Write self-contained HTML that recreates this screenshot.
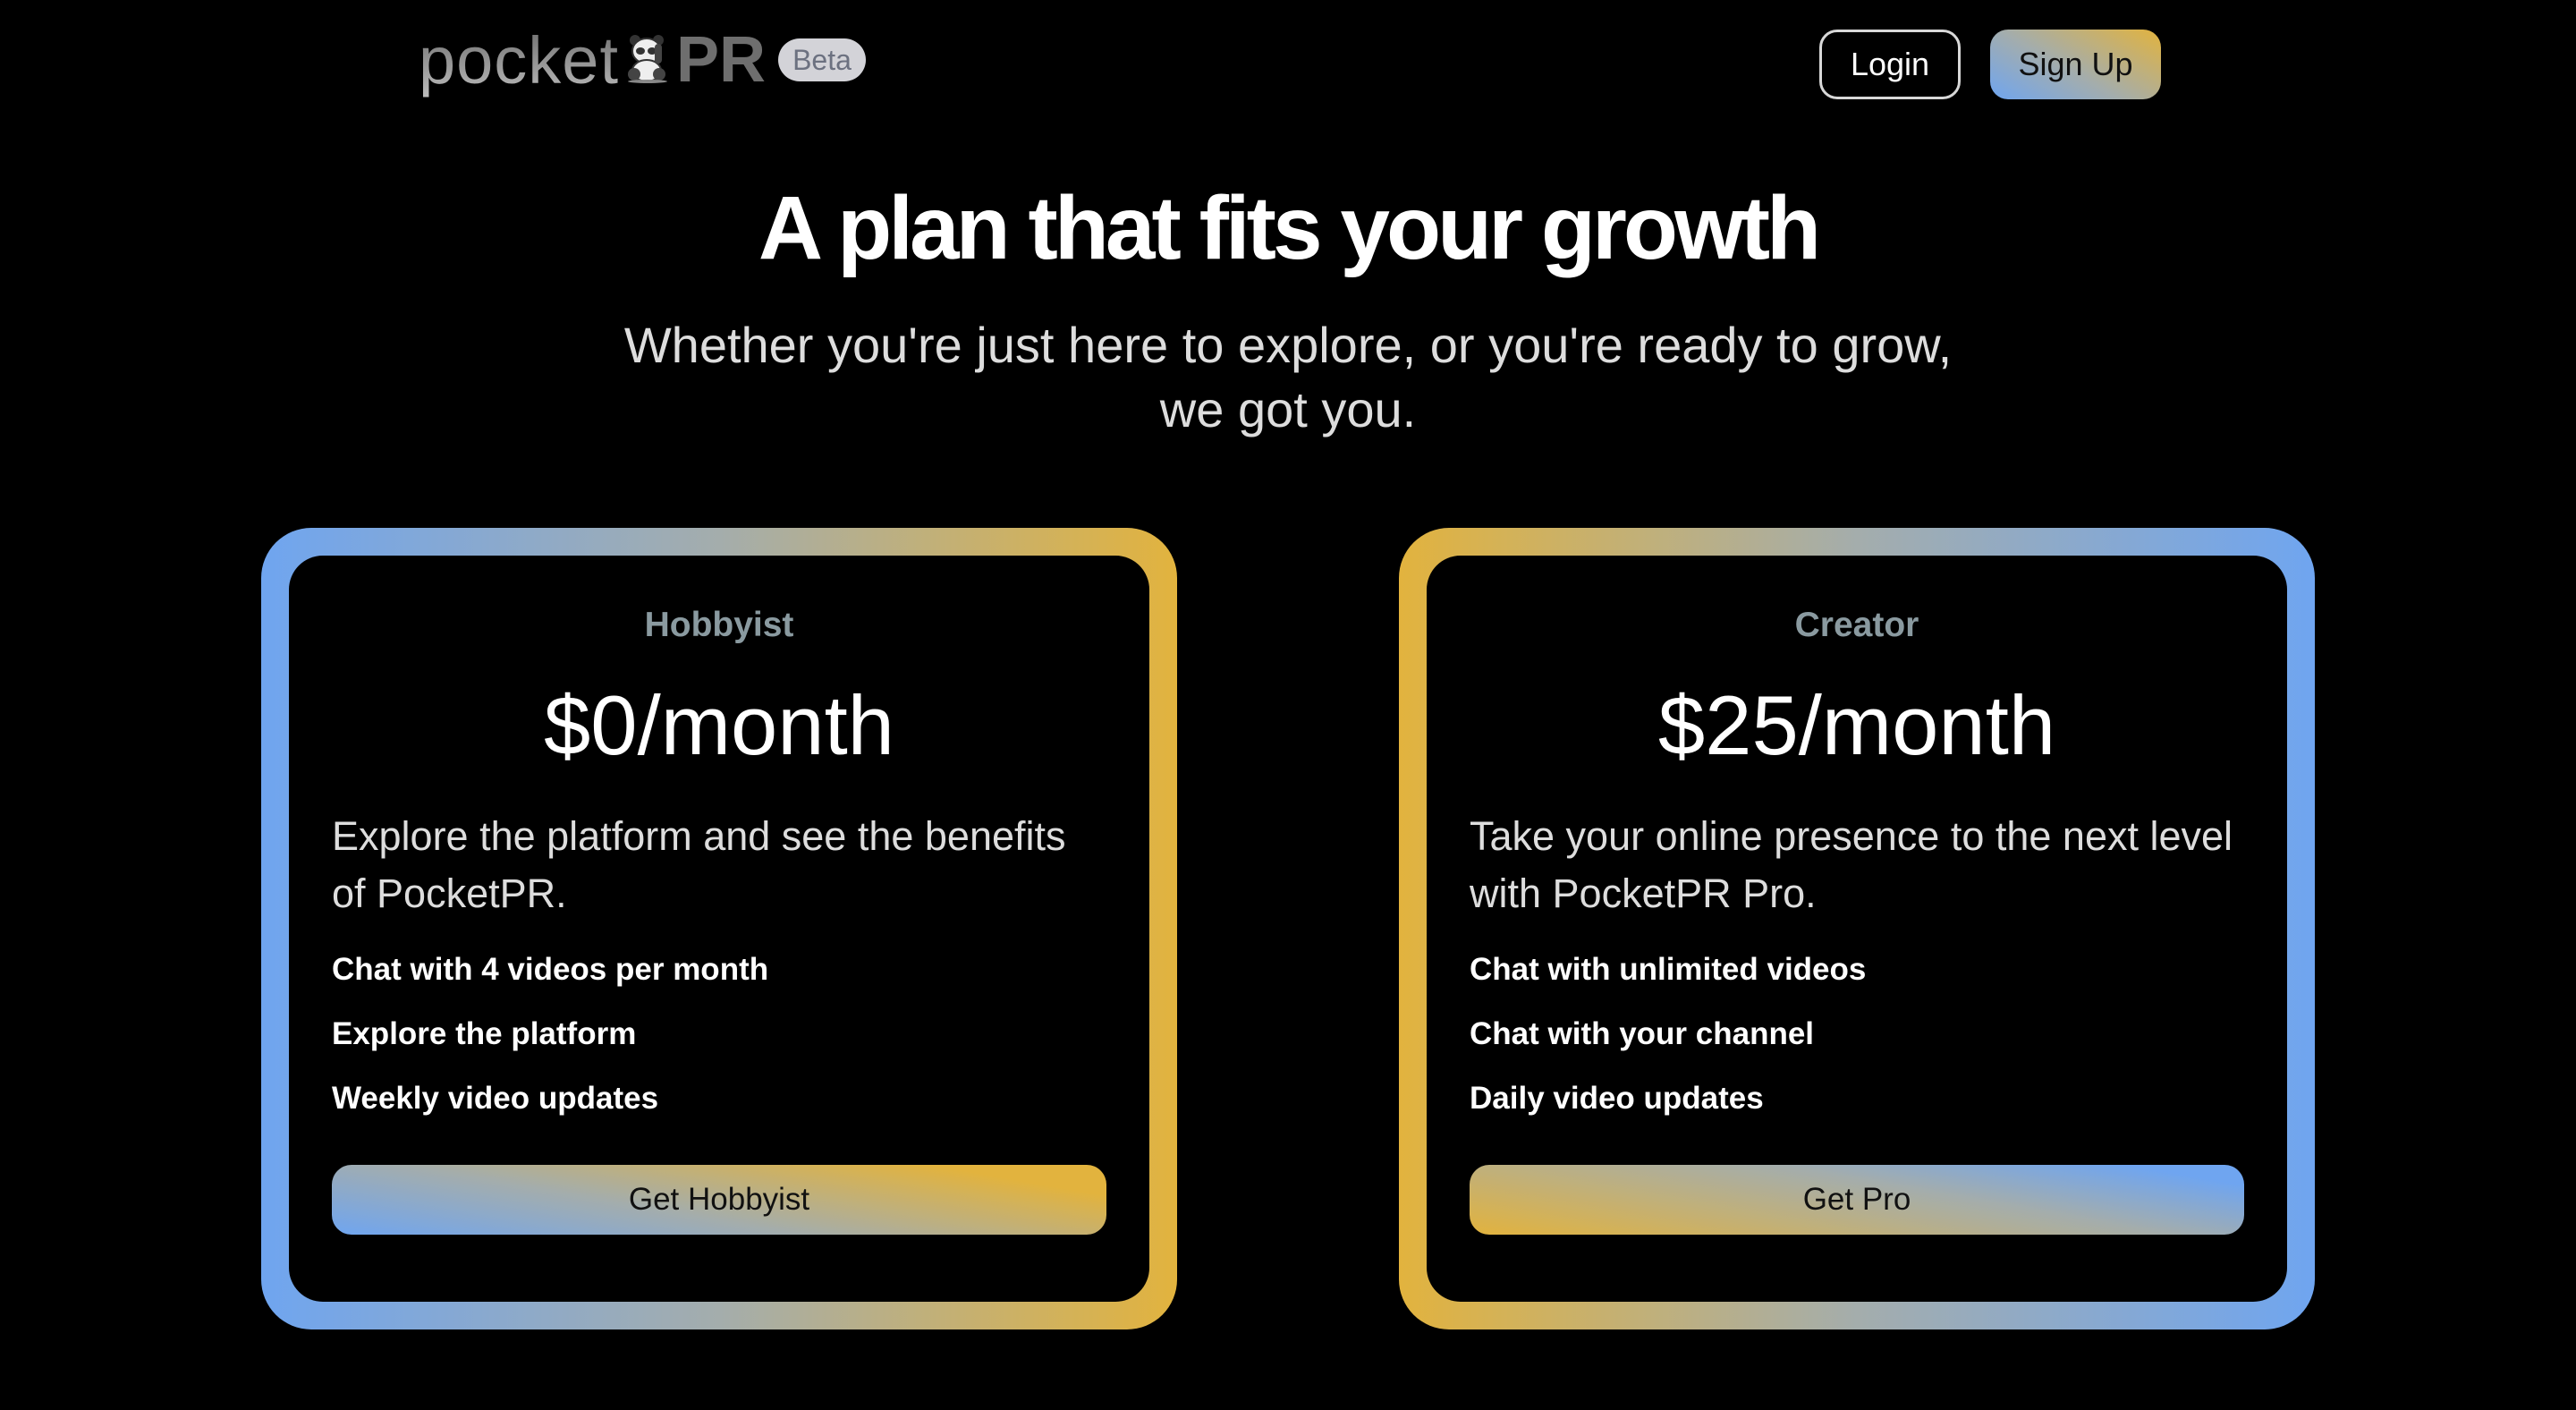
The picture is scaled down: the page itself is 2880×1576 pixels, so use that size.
<!DOCTYPE html>
<html><head><meta charset="utf-8"><style>
*{margin:0;padding:0;box-sizing:border-box}
body{width:2880px;height:1576px;background:#000;font-family:"Liberation Sans",sans-serif;color:#fff;position:relative;overflow:hidden}
.logo{position:absolute;left:468px;top:22px;height:90px;display:flex;align-items:center}
.logo .p{font-size:74px;background:linear-gradient(#6a6a6a,#bdbdbd);-webkit-background-clip:text;color:transparent;letter-spacing:1px}
.logo .pr{font-size:72px;font-weight:700;color:#6e6e6e;margin-left:6px}
.panda{width:52px;height:56px;margin-left:6px;position:relative;top:-2px}
.beta{margin-left:14px;background:#d3d3d8;color:#6c7180;font-size:32px;border-radius:26px;padding:4px 16px;height:48px;line-height:40px}
.btn{position:absolute;top:33px;height:78px;border-radius:20px;font-size:36px;display:flex;align-items:center;justify-content:center}
.login{left:2034px;width:158px;border:3px solid #d8d8d8;color:#fff}
.signup{left:2225px;width:191px;color:#111;background:linear-gradient(30deg,#6fa5f0,#a4adac 45%,#e2b33e)}
h1{position:absolute;top:198px;left:0;width:2880px;text-align:center;font-size:100px;font-weight:700;letter-spacing:-4px}
.sub{position:absolute;top:350px;left:0;width:2880px;text-align:center;font-size:56px;line-height:72px;color:#ddd;font-weight:300}
.card{position:absolute;top:590px;width:1024px;height:896px;border-radius:56px;padding:31px}
.c1{left:292px;background:linear-gradient(90deg,#6fa5f0,#a4adac 50%,#e2b33e)}
.c2{left:1564px;background:linear-gradient(90deg,#e2b33e,#a4adac 50%,#6fa5f0)}
.in{background:#000;width:100%;height:100%;border-radius:38px;position:relative;padding:0 48px}
.lbl{position:absolute;top:56px;left:0;width:100%;text-align:center;font-size:39px;font-weight:700;color:#8a9aa0}
.price{position:absolute;top:136px;left:0;width:100%;text-align:center;font-size:94px}
.desc{position:absolute;top:282px;left:48px;right:48px;font-size:45px;line-height:64px;color:#ddd;font-weight:300}
.feat{position:absolute;left:48px;font-size:35px;font-weight:700}
.cta{position:absolute;left:48px;right:48px;top:681px;height:78px;border-radius:22px;color:#111;font-size:35px;display:flex;align-items:center;justify-content:center}
.c1 .cta{background:linear-gradient(10deg,#6fa5f0,#a4adac 40%,#e2b33e 85%)}
.c2 .cta{background:linear-gradient(10deg,#e2b33e,#a4adac 60%,#6fa5f0 90%)}
</style></head><body>
<div class="logo"><span class="p">pocket</span>
<svg class="panda" viewBox="0 0 52 56"><circle cx="12" cy="8" r="6" fill="#333"/><circle cx="38" cy="8" r="6" fill="#333"/><ellipse cx="25" cy="20" rx="16" ry="14" fill="#eee" stroke="#333" stroke-width="2"/><ellipse cx="18" cy="20" rx="5" ry="4" fill="#333"/><ellipse cx="31" cy="20" rx="5" ry="4" fill="#333"/><ellipse cx="25" cy="42" rx="16" ry="12" fill="#eee" stroke="#333" stroke-width="2"/><ellipse cx="11" cy="46" rx="7" ry="7" fill="#444"/><ellipse cx="39" cy="46" rx="7" ry="7" fill="#444"/><rect x="34" y="12" width="8" height="22" rx="4" fill="#444"/><ellipse cx="26" cy="54" rx="22" ry="2" fill="#888"/></svg>
<span class="pr">PR</span><span class="beta">Beta</span></div>
<div class="btn login">Login</div>
<div class="btn signup">Sign Up</div>
<h1>A plan that fits your growth</h1>
<div class="sub">Whether you're just here to explore, or you're ready to grow,<br>we got you.</div>
<div class="card c1"><div class="in">
<div class="lbl">Hobbyist</div><div class="price">$0/month</div>
<div class="desc">Explore the platform and see the benefits of PocketPR.</div>
<div class="feat" style="top:443px">Chat with 4 videos per month</div>
<div class="feat" style="top:515px">Explore the platform</div>
<div class="feat" style="top:587px">Weekly video updates</div>
<div class="cta">Get Hobbyist</div></div></div>
<div class="card c2"><div class="in">
<div class="lbl">Creator</div><div class="price">$25/month</div>
<div class="desc">Take your online presence to the next level with PocketPR Pro.</div>
<div class="feat" style="top:443px">Chat with unlimited videos</div>
<div class="feat" style="top:515px">Chat with your channel</div>
<div class="feat" style="top:587px">Daily video updates</div>
<div class="cta">Get Pro</div></div></div>
</body></html>
